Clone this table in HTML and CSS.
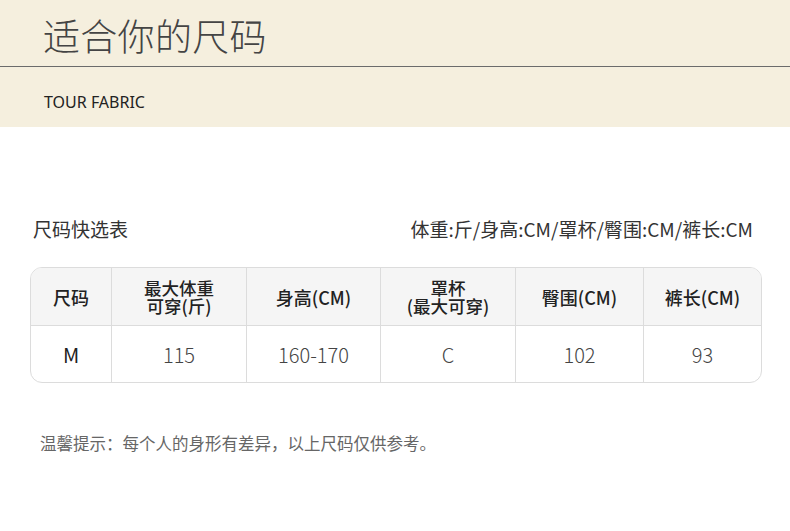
FILE: index.html
```html
<!DOCTYPE html>
<html lang="zh-CN">
<head>
<meta charset="utf-8">
<link rel="stylesheet" href="styles.css">
</head>
<body>
<header class="band">
  <h1 class="title">适合你的尺码</h1>
  <div class="rule"></div>
  <div class="sub">TOUR FABRIC</div>
</header>
<section class="main">
  <div class="caption">
    <span>尺码快选表</span>
    <span class="legend">体重:斤/身高:CM/罩杯/臀围:CM/裤长:CM</span>
  </div>
  <div class="table">
    <div class="cell head">尺码</div>
    <div class="cell head two">最大体重<br>可穿(斤)</div>
    <div class="cell head">身高(CM)</div>
    <div class="cell head two">罩杯<br>(最大可穿)</div>
    <div class="cell head">臀围(CM)</div>
    <div class="cell head last">裤长(CM)</div>
    <div class="cell body size">M</div>
    <div class="cell body">115</div>
    <div class="cell body">160-170</div>
    <div class="cell body">C</div>
    <div class="cell body">102</div>
    <div class="cell body last">93</div>
  </div>
  <p class="note">温馨提示：每个人的身形有差异，以上尺码仅供参考。</p>
</section>
</body>
</html>
```
FILE: styles.css
```css
html, body {
  margin: 0;
  padding: 0;
  background: #ffffff;
  font-family: "Noto Sans CJK SC", "Noto Sans", sans-serif;
  color: #222;
}
.band {
  background: #f5efde;
  height: 127px;
  display: flex;
  flex-direction: column;
}
.title {
  margin: 0;
  padding: 11px 0 0 43px;
  height: 66px;
  box-sizing: border-box;
  font-size: 37px;
  line-height: 49px;
  font-weight: 200;
  color: #444;
  letter-spacing: 0.3px;
}
.rule {
  height: 1px;
  background: #6b6b6b;
}
.sub {
  padding: 25px 0 0 44px;
  font-size: 16px;
  line-height: 20px;
  color: #222;
  font-family: "Noto Sans", sans-serif;
}
.main {
  padding: 89px 28px 0 30px;
}
.caption {
  display: flex;
  justify-content: space-between;
  padding: 0 0 0 3px;
  font-size: 19px;
  line-height: 26px;
  color: #333;
  height: 51px;
}
.legend {
  margin-right: 9px;
}
.table {
  display: grid;
  grid-template-columns: 81px 135px 134px 135px 128px 1fr;
  grid-template-rows: 58px 56px;
  width: 732px;
  border: 1px solid #dcdcdc;
  border-radius: 12px;
  overflow: hidden;
  box-sizing: border-box;
}
.cell {
  display: flex;
  align-items: center;
  justify-content: center;
  text-align: center;
  border-right: 1px solid #dcdcdc;
}
.cell.last { border-right: none; }
.head {
  background: #f5f5f5;
  border-bottom: 1px solid #dcdcdc;
  font-size: 18px;
  font-weight: 500;
  color: #222;
}
.head.two {
  font-size: 17.5px;
  line-height: 18px;
}
.body {
  font-size: 20px;
  color: #444;
  font-weight: 300;
}
.body.size {
  font-size: 20px;
  font-weight: 400;
  color: #222;
}
.note {
  margin: 49px 0 0 10px;
  font-size: 16.5px;
  color: #666;
  line-height: 22px;
}
```
